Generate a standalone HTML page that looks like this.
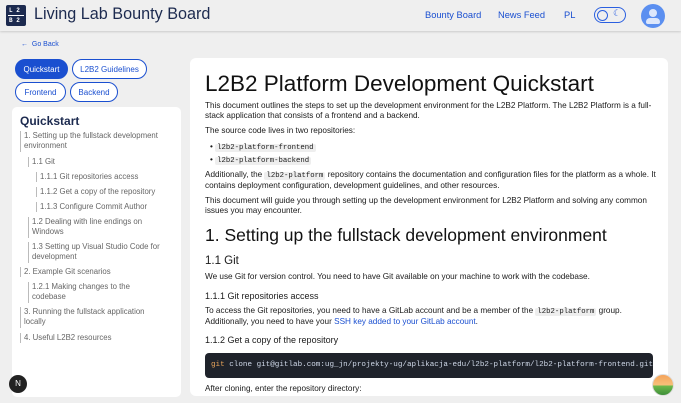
<!DOCTYPE html>
<html><head><meta charset="utf-8"><style>
*{margin:0;padding:0;box-sizing:border-box}
body{width:681px;height:403px;overflow:hidden;background:#efefef;font-family:"Liberation Sans",sans-serif;color:#222;position:relative}
.hdr{position:absolute;left:0;top:0;width:681px;height:31px;background:#efefef;box-shadow:0 1px 2px rgba(0,0,0,.15)}
.logo{position:absolute;left:6px;top:5px;width:20px;height:21px;background:#1c2a4f;border-radius:2px}
.logo span{position:absolute;font:bold 6px "Liberation Mono",monospace;color:#fff}
.title{position:absolute;left:34px;top:5px;font-size:16.2px;color:#1c2a4f}
.nav{position:absolute;top:10px;font-size:9.3px;color:#1a4fd0}
.tog{position:absolute;left:594px;top:7px;width:32px;height:16px;border:1.5px solid #2a5fe0;border-radius:8px}
.tog i{position:absolute;left:2px;top:1.5px;width:11px;height:11px;border:1.2px solid #2a5fe0;border-radius:50%}
.av{position:absolute;left:641px;top:4px;width:24px;height:24px;border-radius:50%;background:#5b8ff0}
.back{position:absolute;left:21px;top:41px;font-size:7px;color:#1a4fd0}
.pill{position:absolute;height:20px;border:1.3px solid #1a4fd0;border-radius:10px;font-size:8px;color:#1a4fd0;display:flex;align-items:center;justify-content:center;background:#fff}
.pill.a{background:#1a4fd0;color:#fff}
.side{position:absolute;left:12px;top:107px;width:169px;height:290px;background:#fff;border-radius:5px}
.side h3{position:absolute;left:8px;top:7px;font-size:12px;color:#1c2a4f}
.toc{position:absolute;font-size:7.8px;color:#666;line-height:10.3px;border-left:1.5px solid #bbb;padding-left:3px;white-space:nowrap}
.main{position:absolute;left:190px;top:58px;width:478px;height:338px;background:#fff;border-radius:6px;overflow:hidden}
.c{position:absolute;left:15px;width:455px;font-size:8.2px;line-height:10.4px;color:#1a1a1a}
code{font-family:"Liberation Mono",monospace;background:#eee;font-size:7.3px;padding:0 2px;border-radius:2px}
.cb{position:absolute;left:15px;top:295px;width:448px;height:25px;background:#1f232b;border-radius:4px;font:7.6px "Liberation Mono",monospace;color:#cfd8e8;padding:8px 6px;white-space:nowrap;overflow:hidden}
</style></head><body>
<div class="hdr">
<div class="logo"><span style="left:3px;top:2px">L 2</span><span style="left:3px;top:12px">B 2</span><div style="position:absolute;left:2px;top:10px;width:16px;height:1px;background:#fff"></div></div>
<div class="title">Living Lab Bounty Board</div>
<div class="nav" style="left:425px">Bounty Board</div>
<div class="nav" style="left:498px">News Feed</div>
<div class="nav" style="left:564px">PL</div>
<div class="tog"><i></i><span style="position:absolute;left:18px;top:0;font-size:9px;color:#2a5fe0">☾</span></div>
<div class="av"><div style="position:absolute;left:8px;top:5px;width:8px;height:8px;border-radius:50%;background:#dde7fb"></div><div style="position:absolute;left:5px;top:14px;width:14px;height:6px;border-radius:6px 6px 3px 3px;background:#dde7fb"></div></div>
</div>
<div class="back">←&nbsp; Go Back</div>
<div class="pill a" style="left:15px;top:59px;width:53px">Quickstart</div>
<div class="pill" style="left:72px;top:59px;width:75px">L2B2 Guidelines</div>
<div class="pill" style="left:15px;top:82px;width:51px">Frontend</div>
<div class="pill" style="left:70px;top:82px;width:48px">Backend</div>
<div class="side"><h3>Quickstart</h3>
<div class="toc" style="left:8px;top:24px">1. Setting up the fullstack development<br>environment</div>
<div class="toc" style="left:16px;top:50px">1.1 Git</div>
<div class="toc" style="left:24px;top:65px">1.1.1 Git repositories access</div>
<div class="toc" style="left:24px;top:80px">1.1.2 Get a copy of the repository</div>
<div class="toc" style="left:24px;top:95px">1.1.3 Configure Commit Author</div>
<div class="toc" style="left:16px;top:110px">1.2 Dealing with line endings on<br>Windows</div>
<div class="toc" style="left:16px;top:135px">1.3 Setting up Visual Studio Code for<br>development</div>
<div class="toc" style="left:8px;top:160px">2. Example Git scenarios</div>
<div class="toc" style="left:16px;top:175px">1.2.1 Making changes to the<br>codebase</div>
<div class="toc" style="left:8px;top:200px">3. Running the fullstack application<br>locally</div>
<div class="toc" style="left:8px;top:226px">4. Useful L2B2 resources</div>
<div style="position:absolute;left:-3px;top:268px;width:18px;height:18px;border-radius:50%;background:#222;color:#fff;font-size:8px;text-align:center;line-height:18px">N</div>
</div>
<div class="main">
<div class="c" style="top:12px;font-size:22.5px;line-height:28px;color:#111">L2B2 Platform Development Quickstart</div>
<div class="c" style="top:43px">This document outlines the steps to set up the development environment for the L2B2 Platform. The L2B2 Platform is a full-stack application that consists of a frontend and a backend.</div>
<div class="c" style="top:68px">The source code lives in two repositories:</div>
<div class="c" style="top:84px;left:20px">• <code>l2b2-platform-frontend</code></div>
<div class="c" style="top:97px;left:20px">• <code>l2b2-platform-backend</code></div>
<div class="c" style="top:112px">Additionally, the <code>l2b2-platform</code> repository contains the documentation and configuration files for the platform as a whole. It contains deployment configuration, development guidelines, and other resources.</div>
<div class="c" style="top:138px">This document will guide you through setting up the development environment for L2B2 Platform and solving any common issues you may encounter.</div>
<div class="c" style="top:166px;font-size:17.5px;line-height:22px;color:#111">1. Setting up the fullstack development environment</div>
<div class="c" style="top:196px;font-size:11.5px;line-height:14px">1.1 Git</div>
<div class="c" style="top:214px">We use Git for version control. You need to have Git available on your machine to work with the codebase.</div>
<div class="c" style="top:233px;font-size:9px">1.1.1 Git repositories access</div>
<div class="c" style="top:248px">To access the Git repositories, you need to have a GitLab account and be a member of the <code>l2b2-platform</code> group. Additionally, you need to have your <span style="color:#1a4fd0">SSH key added to your GitLab account</span>.</div>
<div class="c" style="top:277px;font-size:9px">1.1.2 Get a copy of the repository</div>
<div class="cb"><span style="color:#e8a45a">git</span> clone git@gitlab.com:ug_jn/projekty-ug/aplikacja-edu/l2b2-platform/l2b2-platform-frontend.git</div>
<div class="c" style="top:326px">After cloning, enter the repository directory:</div>
</div>
<div style="position:absolute;left:652px;top:374px;width:22px;height:22px;border-radius:50%;background:linear-gradient(#f5a35a 0,#f5c07a 50%,#6cb84a 55%,#3f8f3a 100%);border:1.5px solid #ddd"></div>
</body></html>
